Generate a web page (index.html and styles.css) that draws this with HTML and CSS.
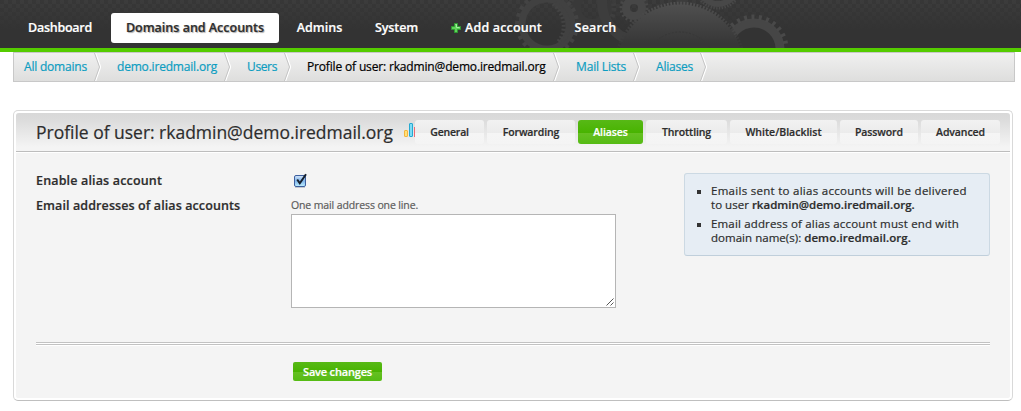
FILE: index.html
```html
<!DOCTYPE html>
<html lang="en">
<head>
<meta charset="utf-8">
<title>Profile of user</title>
<link rel="stylesheet" href="styles.css">
</head>
<body>
<header class="header">
  <svg class="gears" width="300" height="48" viewBox="500 0 300 48" aria-hidden="true">
    <defs>
      <linearGradient id="disc" x1="0" y1="0" x2="0" y2="48" gradientUnits="userSpaceOnUse">
        <stop offset="0" stop-color="#525252"/><stop offset=".9" stop-color="#373737"/>
      </linearGradient>
    </defs>
    <g fill="none">
      <circle cx="592" cy="8" r="16" stroke="#393939" stroke-width="10"/>
      <circle cx="592" cy="8" r="22" stroke="#3e3e3e" stroke-width="5" stroke-dasharray="3 3.3"/>
      <circle cx="642" cy="2" r="40" stroke="#3d3d3d" stroke-width="10"/>
      <circle cx="547" cy="24" r="25" stroke="#414141" stroke-width="7"/>
      <circle cx="547" cy="24" r="30" stroke="#434343" stroke-width="4" stroke-dasharray="3.8 4"/>
      <path d="M555 4c13 7 19 26 5 39" stroke="#414141" stroke-width="5"/>
      <path d="M553 4c11 9 15 26 5 38" stroke="#434343" stroke-width="4" stroke-dasharray="2 2"/>
      <circle cx="634" cy="8" r="8" stroke="#474747" stroke-width="8"/>
      <circle cx="634" cy="8" r="13" stroke="#484848" stroke-width="3" stroke-dasharray="2 2.5"/>
      <circle cx="718" cy="-15" r="19" stroke="#484848" stroke-width="6"/>
      <circle cx="718" cy="-15" r="23" stroke="#484848" stroke-width="3" stroke-dasharray="1.4 1.4"/>
      <circle cx="754" cy="49" r="26" stroke="#464646" stroke-width="9"/>
      <circle cx="754" cy="49" r="32" stroke="#494949" stroke-width="5" stroke-dasharray="3 4.4"/>
    </g>
    <circle cx="680" cy="68" r="63.5" fill="url(#disc)"/>
    <circle cx="680" cy="68" r="64.5" fill="none" stroke="url(#disc)" stroke-width="3.5" stroke-dasharray="1.8 1.5"/>
    <circle cx="680" cy="68" r="36" fill="none" stroke="#383838" stroke-dasharray="2 1.5"/>
  </svg>
  <nav class="nav">
    <a class="nav-item nav-dashboard">Dashboard</a>
    <a class="nav-item nav-domains active">Domains and Accounts</a>
    <a class="nav-item nav-admins">Admins</a>
    <a class="nav-item nav-system">System</a>
    <a class="nav-item nav-add"><svg width="11" height="11" viewBox="0 0 11 11"><path d="M3.5.5h3v3h3v3h-3v3h-3v-3h-3v-3h3z" fill="#5fd35a" stroke="#2f9a32"/><path d="M4.5 1.5h1v3h3" fill="none" stroke="#a5eca0"/></svg>Add account</a>
    <a class="nav-item nav-search">Search</a>
  </nav>
</header>

<div class="crumbs">
  <a class="crumb c-all">All domains</a><svg class="sep" width="7" height="28" viewBox="0 0 7 28"><path d="M1.5 0l5 14-5 14"/><path class="edge" d="M.5 0l5 14-5 14"/></svg>
  <a class="crumb c-domain">demo.iredmail.org</a><svg class="sep" width="7" height="28" viewBox="0 0 7 28"><path d="M1.5 0l5 14-5 14"/><path class="edge" d="M.5 0l5 14-5 14"/></svg>
  <a class="crumb c-users">Users</a><svg class="sep" width="7" height="28" viewBox="0 0 7 28"><path d="M1.5 0l5 14-5 14"/><path class="edge" d="M.5 0l5 14-5 14"/></svg>
  <a class="crumb c-profile current">Profile of user: rkadmin@demo.iredmail.org</a><svg class="sep" width="7" height="28" viewBox="0 0 7 28"><path d="M1.5 0l5 14-5 14"/><path class="edge" d="M.5 0l5 14-5 14"/></svg>
  <a class="crumb c-lists">Mail Lists</a><svg class="sep" width="7" height="28" viewBox="0 0 7 28"><path d="M1.5 0l5 14-5 14"/><path class="edge" d="M.5 0l5 14-5 14"/></svg>
  <a class="crumb c-aliases">Aliases</a><svg class="sep" width="7" height="28" viewBox="0 0 7 28"><path d="M1.5 0l5 14-5 14"/><path class="edge" d="M.5 0l5 14-5 14"/></svg>
</div>

<main class="panel">
  <div class="panel-head">
    <h1 class="title">Profile of user: rkadmin@demo.iredmail.org</h1>
    <svg class="chart" width="11" height="14" viewBox="0 0 11 14">
      <rect x=".5" y="7.5" width="3" height="6" rx=".5" fill="#ffe07a" stroke="#f3b63c"/>
      <rect x="5.5" y=".5" width="3" height="13" rx=".5" fill="#7fdcf5" stroke="#27a9d0"/>
      <path d="M10.5 4v10" stroke="#ee6b75"/>
    </svg>
    <div class="tabs">
      <a class="tab t-general">General</a>
      <a class="tab t-forwarding">Forwarding</a>
      <a class="tab t-aliases active">Aliases</a>
      <a class="tab t-throttling">Throttling</a>
      <a class="tab t-lists">White/Blacklist</a>
      <a class="tab t-password">Password</a>
      <a class="tab t-advanced">Advanced</a>
    </div>
  </div>
  <form class="form">
    <div class="fields">
      <label class="label l-enable">Enable alias account</label>
      <div class="check"><svg width="15" height="16" viewBox="0 0 15 16">
        <defs><linearGradient id="box" x1="0" y1="0" x2="0" y2="1"><stop offset="0" stop-color="#d5e6fa"/><stop offset=".5" stop-color="#7fb4ea"/><stop offset="1" stop-color="#bff0ff"/></linearGradient></defs>
        <path d="M2 14.5h10" stroke="#c4c8ce"/>
        <rect x="1.5" y="2.5" width="11" height="11" rx="1.5" fill="url(#box)" stroke="#3d5f9e"/>
        <path d="M4.2 6.5l2.6 3.8L13 1.2" fill="none" stroke="#15202e" stroke-width="2"/>
      </svg></div>
      <label class="label l-emails">Email addresses of alias accounts</label>
      <div class="entry">
        <span class="hint">One mail address one line.</span>
        <div class="textarea"><svg width="8" height="8" viewBox="0 0 8 8"><path d="M.5 7.5l7-7M4.5 7.5l3-3" stroke="#555" fill="none"/></svg></div>
      </div>
    </div>
    <ul class="note">
      <li><span class="n1">Emails sent to alias accounts will be delivered</span><br><span class="n2">to user</span> <b class="n4">rkadmin@demo.iredmail.org.</b></li>
      <li><span class="n3">Email address of alias account must end with</span><br><span class="n2">domain name(s):</span> <b>demo.iredmail.org.</b></li>
    </ul>
  </form>
  <div class="rule"></div>
  <button class="save" type="button">Save changes</button>
</main>
</body>
</html>
```
FILE: styles.css
```css
* { box-sizing: border-box; }
body {
  margin: 0; background: #fff; color: #2d2d2d;
  font: 12px/14px "Open Sans", "Noto Sans", sans-serif;
  -webkit-text-stroke: .2px;
}
svg { display: block; flex: none; }

.header {
  position: relative;
  height: 52px;
  padding: 13px 0 0 13px;
  border-bottom: 4px solid #5c0;
  background-color: #333;
  background-image:
    linear-gradient(rgba(51, 51, 51, 0), #333 30px),
    conic-gradient(#3c3c3c 25%, #373737 0 50%, #3c3c3c 0 75%, #373737 0);
  background-size: 100% 100%, 8px 8px;
}
.gears { position: absolute; left: 500px; top: 0; }
.nav { position: relative; display: flex; height: 30px; }
.nav-item {
  display: flex; align-items: center; justify-content: center; flex: none;
  color: #fff; font-size: 12.5px; font-weight: 600; white-space: nowrap;
  padding-bottom: 1px;
}
.nav-item.active { background: #fff; color: #2d2d2d; border-radius: 3px; text-shadow: 1px 1px 1px #aaa; }
.nav-dashboard { width: 94px; margin-right: 4px; letter-spacing: -.25px; }
.nav-domains { width: 168px; margin-right: 3px; }
.nav-admins { width: 75px; margin-right: 3px; }
.nav-system { width: 73px; margin-right: 3px; letter-spacing: -.1px; }
.nav-add { width: 121px; margin-right: 3px; letter-spacing: .16px; }
.nav-add svg { margin: 1px 3px 0 0; }
.nav-search { width: 71px; letter-spacing: .15px; }

.crumbs {
  display: flex; width: 1002px; height: 30px; margin-left: 13px; padding-left: 10px;
  border: 1px solid #c8c8c8; background: linear-gradient(#f0f0f0, #dededd);
}
.crumb { flex: none; margin-right: 7px; padding-top: 7px; color: #0c9dc1; white-space: nowrap; letter-spacing: -.16px; }
.crumb.current { color: #000; }
.c-all { width: 63px; letter-spacing: -.2px; }
.c-domain { width: 100px; letter-spacing: -.19px; }
.c-users { width: 30px; letter-spacing: -.37px; }
.c-profile { width: 239px; }
.c-lists { width: 50px; }
.c-aliases { width: 37px; letter-spacing: -.2px; }
.sep { margin-right: 16px; fill: none; stroke: #fff; stroke-width: 1.4px; }
.sep .edge { stroke: #c4c4c4; stroke-width: 1px; }

.panel {
  width: 1000px; height: 291px; margin: 28px 0 0 13px;
  border: 1px solid #d9d9d9; border-bottom-color: #bfbfbf; border-radius: 5px;
  background: #f4f4f4; box-shadow: inset 0 0 0 2px #fff;
}
.panel-head {
  display: flex; height: 39px; margin: 2px 2px 0; padding-left: 20px;
  border-bottom: 1px solid #bdbdbd; border-radius: 3px 3px 0 0;
  background: linear-gradient(#d8d8d8, #dadada 5px, #f4f4f4 34px); box-shadow: 0 1px #fff;
}
.title { flex: none; width: 368px; margin: 7px 0 0; font-size: 17.5px; line-height: 24px; font-weight: 400; letter-spacing: -.02px; white-space: nowrap; }
.chart { margin-top: 10px; }
.tabs { display: flex; gap: 3px; padding-top: 7px; }
.tab {
  height: 24px; padding-top: 5px; border-radius: 3px; text-align: center;
  font-size: 10.5px; font-weight: 600; letter-spacing: -.1px; white-space: nowrap;
  background: linear-gradient(#f2f2f2, #ebebeb 13px, #f5f5f5 13px, #f4f4f4);
}
.tab.active { color: #fff; background: linear-gradient(#57b916, #48b300 13px, #66c022 13px, #55bb14); }
.t-general { width: 69px; letter-spacing: -.2px; }
.t-forwarding { width: 88px; }
.t-aliases { width: 65px; }
.t-throttling { width: 81px; }
.t-lists { width: 107px; letter-spacing: 0; }
.t-password { width: 78px; }
.t-advanced { width: 79px; }

.form { display: flex; height: 190px; padding: 21px 22px 0; }
.fields { display: grid; grid-template-columns: 255px 325px; grid-template-rows: 25px 110px; width: 648px; }
.label { padding-top: 1px; font-size: 12.5px; font-weight: 600; letter-spacing: .1px; white-space: nowrap; }
.l-enable { letter-spacing: .16px; }
.check { padding-left: 2px; }
.hint { display: block; height: 16px; color: #5c5c5c; font-size: 10.5px; letter-spacing: -.12px; }
.textarea {
  display: flex; align-items: flex-end; justify-content: flex-end;
  height: 94px; padding: 1px; border: 1px solid #b5b5b5; background: #fff;
}
.note {
  width: 306px; height: 83px; margin: 0; padding: 10px 0 0 26px; list-style: none;
  border: 1px solid #ccd9e3; border-bottom-color: #c0cfdb; border-radius: 3px; background: #e6edf4;
  font-size: 11.5px; white-space: nowrap;
}
.note li { position: relative; margin-bottom: 5px; }
.note li::before { content: ""; position: absolute; left: -14px; top: 6px; width: 4px; height: 4px; background: #333; }
.note b { font-weight: 600; letter-spacing: .06px; }
.note .n4 { letter-spacing: 0; }
.n1 { letter-spacing: .28px; }
.n2 { letter-spacing: .03px; }
.n3 { letter-spacing: .16px; }
.rule { height: 4px; margin: 0 22px; background: linear-gradient(#c2c2c2 1px, #fff 1px 2px, #c2c2c2 2px 3px, #fff 3px); }
.save {
  display: block; width: 89px; height: 19px; margin: 16px 0 0 279px; padding: 0 0 1px;
  border: 0; border-radius: 2px; color: #fff;
  background: linear-gradient(#57b916, #48b300 10px, #66c022 10px, #55bb14);
  font: 600 11px/17px "Open Sans", sans-serif; letter-spacing: -.18px;
}
```
